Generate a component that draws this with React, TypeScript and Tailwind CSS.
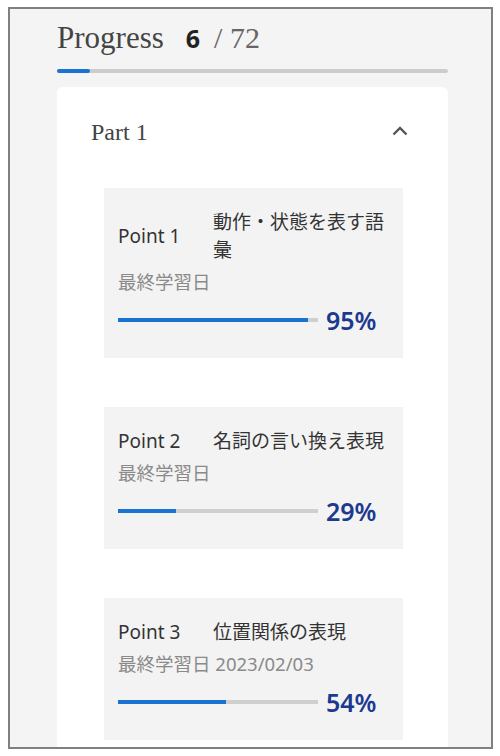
import React from "react";

const points = [
  { label: "Point 1", title: "動作・状態を表す語彙", date: "", pct: 95 },
  { label: "Point 2", title: "名詞の言い換え表現", date: "", pct: 29 },
  { label: "Point 3", title: "位置関係の表現", date: "2023/02/03", pct: 54 },
];

const sans = { fontFamily: '"Noto Sans", "Noto Sans CJK JP", sans-serif' };
const serif = { fontFamily: '"Liberation Serif", "Noto Serif CJK JP", serif' };

function PointCard({ p }: { p: (typeof points)[number] }) {
  return (
    <div className="ml-[47px] mr-[45px] bg-[#f3f3f3] pl-[14px] pr-[14px] pt-[20px] pb-[22px]" style={sans}>
      <div className="flex items-center">
        <div className="w-[95px] shrink-0 text-[19px] leading-[28px] text-[#333]">{p.label}</div>
        <div className="flex-1 text-[19px] leading-[28px] text-[#333]">{p.title}</div>
      </div>
      <div className="mt-[4px] text-[18.5px] leading-[28px] text-[#8a8a8a]">
        最終学習日{p.date ? " " + p.date : ""}
      </div>
      <div className="mt-[8px] flex h-[32px] items-center">
        <div className="relative h-[4px] w-[200px] bg-[#cfcfcf]">
          <div className="absolute left-0 top-0 h-[4px] bg-[#1a73d0]" style={{ width: `${p.pct}%` }} />
        </div>
        <div className="ml-[8px] text-[25px] font-semibold leading-[32px] text-[#1b3a8f]">{p.pct}%</div>
      </div>
    </div>
  );
}

export default function App() {
  return (
    <div className="h-[756px] w-[500px] bg-white pl-[8px] pt-[7px]">
      <div className="h-[742px] w-[485px] overflow-hidden border-2 border-[#808080] bg-[#f4f4f4] pl-[47px] pr-[43px] pt-[9px]">
        <div className="flex h-[40px] items-center">
          <span className="text-[31px] leading-[40px] text-[#444]" style={serif}>Progress</span>
          <span className="ml-[22px] text-[25px] font-bold leading-[40px] text-[#222]" style={sans}>6</span>
          <span className="ml-[14px] text-[30px] leading-[40px] text-[#666]" style={serif}>/ 72</span>
        </div>
        <div className="mt-[11px] h-[4px] w-full rounded-full bg-[#cccccc]">
          <div className="h-[4px] rounded-full bg-[#1a73d0]" style={{ width: `${(6 / 72) * 100}%` }} />
        </div>
        <div className="mt-[14px] rounded-[6px] bg-white pb-[40px]">
          <div className="flex h-[90px] items-center justify-between pl-[34px] pr-[40px]">
            <span className="text-[24px] text-[#444]" style={serif}>Part 1</span>
            <svg width="16" height="10" viewBox="0 0 16 10" className="mb-[2px]">
              <polyline points="1.5,8.5 8,2 14.5,8.5" fill="none" stroke="#555" strokeWidth="2.4" />
            </svg>
          </div>
          <div className="mt-[11px] flex flex-col gap-[49px]">
            {points.map((p) => (
              <PointCard key={p.label} p={p} />
            ))}
          </div>
        </div>
      </div>
    </div>
  );
}
